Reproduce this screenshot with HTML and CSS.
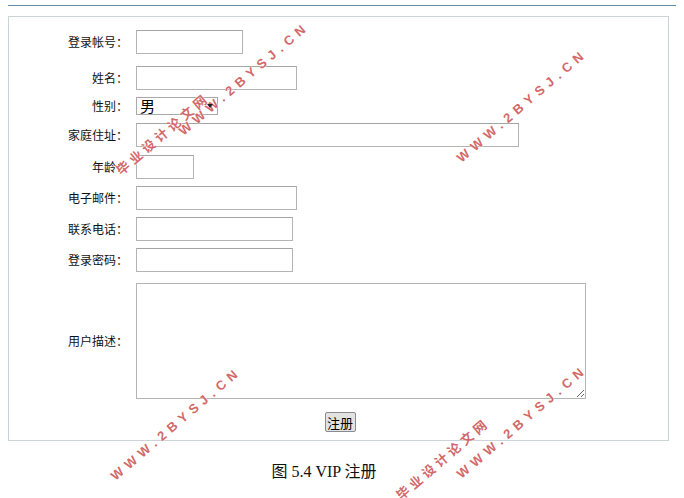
FILE: index.html
```html
<!DOCTYPE html>
<html lang="zh">
<head>
<meta charset="utf-8">
<title>VIP 注册</title>
<link rel="stylesheet" href="styles.css">
</head>
<body>
<div class="topline"></div>
<div class="panel">
  <div class="row">
    <span class="label">登录帐号：</span>
    <input class="field w-account" type="text">
  </div>
  <div class="row gap-12">
    <span class="label">姓名：</span>
    <input class="field w-name" type="text">
  </div>
  <div class="row gap-7">
    <span class="label">性别：</span>
    <span class="select-wrap">
      <select class="select"><option>男</option><option>女</option></select>
      <span class="select-arrow"></span>
    </span>
  </div>
  <div class="row gap-8">
    <span class="label">家庭住址：</span>
    <input class="field w-address" type="text">
  </div>
  <div class="row gap-8">
    <span class="label">年龄：</span>
    <input class="field w-age" type="text">
  </div>
  <div class="row gap-7">
    <span class="label">电子邮件：</span>
    <input class="field w-email" type="text">
  </div>
  <div class="row gap-7">
    <span class="label">联系电话：</span>
    <input class="field w-phone" type="text">
  </div>
  <div class="row gap-7">
    <span class="label">登录密码：</span>
    <input class="field w-phone" type="password">
  </div>
  <div class="row gap-11">
    <span class="label">用户描述：</span>
    <textarea class="area"></textarea>
  </div>
  <div class="submit-row">
    <button class="btn" type="button">注册</button>
  </div>
</div>
<div class="caption">图 5.4 VIP 注册</div>

<span class="wm wm-en wm-a">WWW.2BYSJ.CN</span>
<span class="wm wm-cn wm-ca">毕业设计论文网</span>
<span class="wm wm-en wm-b">WWW.2BYSJ.CN</span>
<span class="wm wm-en wm-c">WWW.2BYSJ.CN</span>
<span class="wm wm-en wm-d">WWW.2BYSJ.CN</span>
<span class="wm wm-cn wm-cd">毕业设计论文网</span>
</body>
</html>
```

FILE: styles.css
```css
html, body {
  margin: 0;
  padding: 0;
  overflow: hidden;
  background: #ffffff;
}

body {
  width: 684px;
  height: 498px;
  position: relative;
  font-family: "Noto Sans CJK SC", "DejaVu Sans", sans-serif;
  font-size: 12px;
  color: #111;
}

.topline {
  margin: 5px 8px 0 8px;
  height: 0;
  border-top: 1px solid #5f8b9e;
}

.panel {
  margin: 10px 15px 0 8px;
  border: 1px solid #cdd4d8;
  padding: 13px 0 8px 0;
  display: flex;
  flex-direction: column;
}

.row {
  display: flex;
  align-items: center;
}

.gap-7 { margin-top: 7px; }
.gap-8 { margin-top: 8px; }
.gap-11 { margin-top: 11px; }
.gap-12 { margin-top: 12px; }

.label {
  width: 119px;
  margin-right: 8px;
  text-align: right;
  font-size: 12px;
  line-height: 16px;
  white-space: nowrap;
}

.field {
  box-sizing: border-box;
  height: 24px;
  margin: 0;
  border: 1px solid #b4b4b4;
  border-top-color: #a4a4a4;
  padding: 0 3px;
  font-size: 13px;
  background: #fff;
  outline: none;
}

.w-account { width: 107px; }
.w-name { width: 161px; }
.w-address { width: 383px; }
.w-age { width: 58px; }
.w-email { width: 161px; }
.w-phone { width: 157px; }

.select-wrap {
  position: relative;
  display: inline-block;
  width: 82px;
  height: 18px;
}

.select {
  -webkit-appearance: none;
  appearance: none;
  box-sizing: border-box;
  width: 82px;
  height: 18px;
  margin: 0;
  border: 1px solid #a9a9a9;
  border-radius: 0;
  padding: 0 0 0 3px;
  font-family: "Noto Sans CJK SC", sans-serif;
  font-size: 15px;
  line-height: 16px;
  color: #000;
  background: #fff;
  outline: none;
}

.select-arrow {
  position: absolute;
  z-index: 6;
  right: 5px;
  top: 7px;
  width: 0;
  height: 0;
  border-left: 3px solid transparent;
  border-right: 3px solid transparent;
  border-top: 4px solid #222;
}

.area {
  box-sizing: border-box;
  width: 450px;
  height: 116px;
  margin: 0;
  border: 1px solid #b4b4b4;
  padding: 2px;
  font-size: 13px;
  outline: none;
}

.submit-row {
  margin-top: 13px;
  display: flex;
  justify-content: center;
  padding-left: 3px;
}

.btn {
  box-sizing: border-box;
  height: 20px;
  width: 31px;
  margin: 0;
  padding: 0;
  border: 1px solid #8a8a8a;
  border-radius: 2px;
  background: #e3e3e3;
  font-family: "Noto Sans CJK SC", sans-serif;
  font-size: 13px;
  line-height: 17px;
  color: #000;
}

.caption {
  width: 632px;
  margin: 21px 0 0 8px;
  text-align: center;
  font-family: "Liberation Serif", "Noto Sans CJK SC", serif;
  font-size: 16px;
  line-height: 20px;
  color: #111;
}

.wm {
  position: absolute;
  z-index: 5;
  white-space: nowrap;
  line-height: 14px;
  height: 14px;
  transform-origin: 0 50%;
  transform: rotate(-40.5deg);
  color: rgba(200, 70, 70, 0.82);
  text-shadow: 0 0 1px #ffffff, 0 0 1px #ffffff;
  font-weight: bold;
  pointer-events: none;
}

.wm-en {
  font-family: "Liberation Sans", sans-serif;
  font-size: 13px;
  letter-spacing: 5.3px;
}

.wm-cn {
  font-family: "Noto Sans CJK SC", sans-serif;
  font-size: 13px;
  letter-spacing: 3.8px;
}

.wm-a { left: 181px; top: 126px; }
.wm-b { left: 459px; top: 153px; }
.wm-c { left: 113px; top: 471px; }
.wm-d { left: 459px; top: 469px; }
.wm-ca { left: 118px; top: 165px; }
.wm-cd { left: 398px; top: 490px; }
```
